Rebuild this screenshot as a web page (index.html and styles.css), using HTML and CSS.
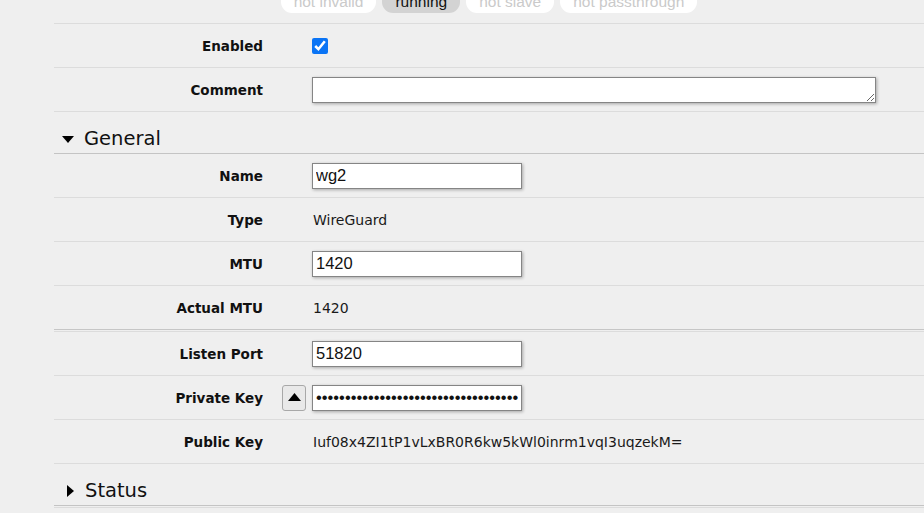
FILE: index.html
```html
<!DOCTYPE html>
<html>
<head>
<meta charset="utf-8">
<link rel="stylesheet" href="styles.css">
</head>
<body>
<div class="page">
  <div class="flags">
    <span class="flag off">not invalid</span>
    <span class="flag on">running</span>
    <span class="flag off">not slave</span>
    <span class="flag off">not passthrough</span>
  </div>
  <div class="row">
    <div class="label">Enabled</div>
    <div class="pre"></div>
    <div class="val"><input class="check" type="checkbox" checked></div>
  </div>
  <div class="row">
    <div class="label">Comment</div>
    <div class="pre"></div>
    <div class="val"><textarea class="area"></textarea></div>
  </div>
  <div class="section">
    <span class="tri-down"></span>
    <span class="sec-title">General</span>
  </div>
  <div class="row">
    <div class="label">Name</div>
    <div class="pre"></div>
    <div class="val"><input class="field" type="text" value="wg2"></div>
  </div>
  <div class="row">
    <div class="label">Type</div>
    <div class="pre"></div>
    <div class="val text">WireGuard</div>
  </div>
  <div class="row">
    <div class="label">MTU</div>
    <div class="pre"></div>
    <div class="val"><input class="field" type="text" value="1420"></div>
  </div>
  <div class="row dark">
    <div class="label">Actual MTU</div>
    <div class="pre"></div>
    <div class="val text">1420</div>
  </div>
  <div class="sep"></div>
  <div class="row">
    <div class="label">Listen Port</div>
    <div class="pre"></div>
    <div class="val"><input class="field" type="text" value="51820"></div>
  </div>
  <div class="row">
    <div class="label">Private Key</div>
    <div class="pre"><button class="toggle"><svg width="13" height="8" viewBox="0 0 13 8"><polygon points="6.5,0 13,8 0,8" fill="#000"/></svg></button></div>
    <div class="val"><input class="field" type="password" value="aaaaaaaaaaaaaaaaaaaaaaaaaaaaaaaaaaaaaaaaaaaa"></div>
  </div>
  <div class="row">
    <div class="label">Public Key</div>
    <div class="pre"></div>
    <div class="val text">Iuf08x4ZI1tP1vLxBR0R6kw5kWl0inrm1vqI3uqzekM=</div>
  </div>
  <div class="section">
    <span class="tri-right"></span>
    <span class="sec-title">Status</span>
  </div>
  <div class="sep"></div>
</div>
</body>
</html>
```

FILE: styles.css
```css
html, body {
  margin: 0;
  padding: 0;
  background: #efefef;
  overflow: hidden;
}
.page {
  margin-left: 54px;
  font-family: "DejaVu Sans", Verdana, sans-serif;
  color: #111;
}
.flags {
  display: flex;
  justify-content: center;
  gap: 6px;
  margin-top: -10px;
  padding-bottom: 10px;
  border-bottom: 1px solid #dcdcdc;
}
.flag {
  font-family: "Liberation Sans", Arial, sans-serif;
  font-size: 15.5px;
  line-height: 23px;
  height: 23px;
  padding: 0 13px;
  border-radius: 11px;
}
.flag.off {
  background: #fff;
  color: #cacaca;
}
.flag.on {
  background: #d3d3d3;
  color: #111;
}
.row {
  display: grid;
  grid-template-columns: 209px 49px 1fr;
  align-items: center;
  min-height: 43px;
  border-bottom: 1px solid #dcdcdc;
}
.row.dark {
  border-bottom-color: #c6c6c6;
}
.label {
  text-align: right;
  font-weight: bold;
  font-size: 13.5px;
}
.pre {
  display: flex;
  justify-content: flex-end;
  padding-right: 6px;
}
.val.text {
  font-size: 14px;
  color: #1a1a1a;
  padding-left: 1px;
}
.check {
  margin: 0;
  width: 16px;
  height: 16px;
  accent-color: #0a74f5;
  display: block;
}
.area {
  display: block;
  box-sizing: border-box;
  width: 564px;
  height: 26px;
  margin: 0;
  border: 1px solid #858585;
  box-shadow: 1px 1px 3px rgba(0,0,0,0.3);
  background: #fff;
  font-family: "Liberation Sans", Arial, sans-serif;
  font-size: 16px;
  padding: 2px 3px;
}
.field {
  display: block;
  box-sizing: border-box;
  width: 210px;
  height: 26px;
  margin: 0;
  border: 1px solid #858585;
  box-shadow: 1px 1px 3px rgba(0,0,0,0.3);
  background: #fff;
  font-family: "Liberation Sans", Arial, sans-serif;
  font-size: 16.5px;
  color: #111;
  padding: 1px 3px;
  outline: none;
}
.toggle {
  box-sizing: border-box;
  width: 24px;
  height: 26px;
  margin: 0;
  padding: 0;
  border: 1px solid #a8a8a8;
  border-radius: 3px;
  background: #e9e9e9;
  display: flex;
  align-items: center;
  justify-content: center;
}
.toggle svg {
  display: block;
  margin-top: -1px;
}
.section {
  box-sizing: border-box;
  display: flex;
  align-items: center;
  height: 42px;
  padding-top: 12px;
  border-bottom: 1px solid #c4c4c4;
  padding-left: 8px;
}
.sec-title {
  font-size: 19.5px;
  color: #111;
  margin-left: 10px;
}
.tri-down {
  width: 0;
  height: 0;
  border-left: 6.5px solid transparent;
  border-right: 6.5px solid transparent;
  border-top: 7px solid #000;
  margin-top: 1px;
}
.tri-right {
  width: 0;
  height: 0;
  border-top: 6px solid transparent;
  border-bottom: 6px solid transparent;
  border-left: 7px solid #000;
  margin-left: 5px;
  margin-right: 1px;
}
.sep {
  height: 1px;
  margin-top: 1px;
  background: #dcdcdc;
}
```
